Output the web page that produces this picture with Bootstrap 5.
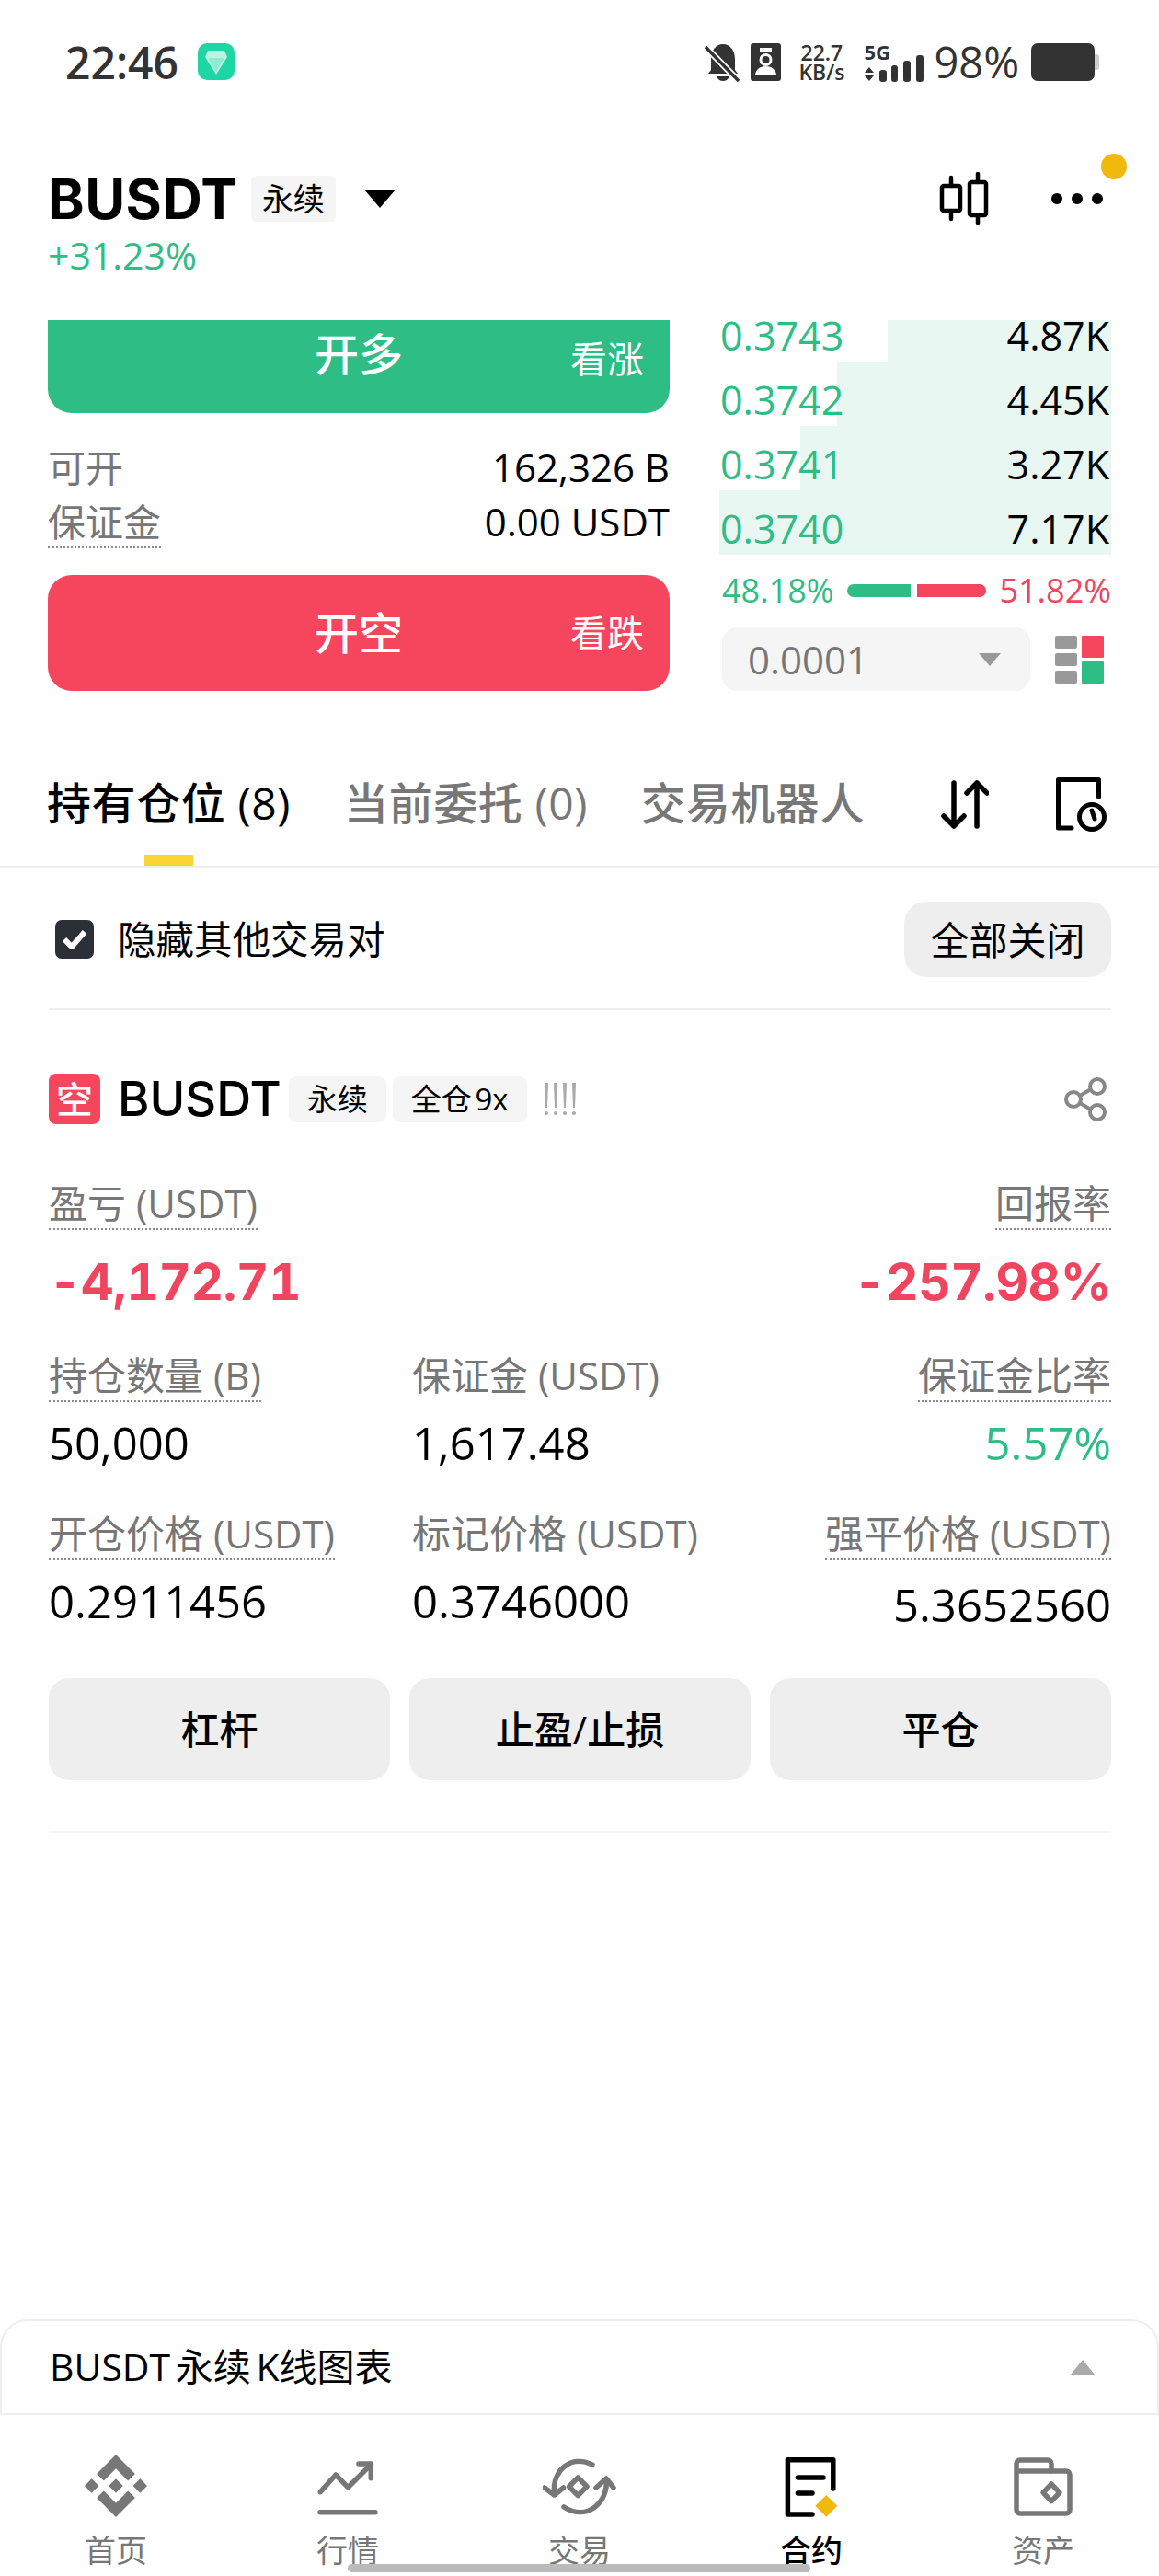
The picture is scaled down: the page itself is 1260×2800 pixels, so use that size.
<!DOCTYPE html>
<html lang="zh-CN">
<head>
  <meta charset="UTF-8">
  <title>BUSDT 永续</title>
  <link href="https://cdn.jsdelivr.net/npm/bootstrap@5.3.3/dist/css/bootstrap.min.css" rel="stylesheet">
  <style>
    body {
      margin: 0;
      background: #fff;
      color: #000;
      font-family: "Open Sans", "Noto Sans CJK SC", sans-serif;
    }
    svg { display: block; flex: none; }
    .phone {
      position: relative;
      width: 1260px;
      height: 2800px;
      overflow: hidden;
      display: flex;
      flex-direction: column;
    }
    .status-bar { height: 100px; padding: 47px 70px 0 71px; color: #333; }
    .clock { font-size: 48px; line-height: 41px; font-weight: 600; }
    .app-mark { width: 40px; height: 40px; margin-left: 21px; border-radius: 10px; background: #1ed6a3; }
    .contact-ico { margin-left: 11px; }
    .speed { width: 52px; margin-left: 18px; font-size: 23px; line-height: 21px; font-weight: 600; text-align: center; white-space: nowrap; }
    .net-box { position: relative; width: 66px; height: 42px; margin-left: 20px; }
    .net-5g { position: absolute; left: 0; top: -3px; font-size: 22px; line-height: 24px; font-weight: 700; }
    .battery-pct { margin-left: 10px; font-size: 47px; line-height: 41px; font-weight: 500; }
    .battery { width: 69px; height: 41px; margin-left: 13px; border-radius: 7px; background: #333; position: relative; }
    .battery::after { content: ""; position: absolute; left: 69px; top: 12px; width: 5px; height: 17px; background: #ccc; border-radius: 0 3px 3px 0; }

    .head-block { position: relative; height: 248px; padding: 86px 52px 0; }
    .pair-name { font-family: Inter, "Noto Sans CJK SC", sans-serif; font-size: 60px; line-height: 60px; font-weight: 700; letter-spacing: .5px; }
    .perp-tag { margin-left: 14px; padding: 0 12px; height: 50px; line-height: 50px; font-size: 34px; background: #f5f5f5; border-radius: 6px; }
    .drop-tri { margin-left: 31px; width: 0; height: 0; border-left: 17px solid transparent; border-right: 17px solid transparent; border-top: 20px solid #000; }
    .pct-up { margin-top: 11px; font-size: 41px; line-height: 40px; color: #2ebd85; }
    .notice-dot { position: absolute; left: 1197px; top: 67px; width: 28px; height: 28px; border-radius: 50%; background: #f0b90b; }
    .head-tools { margin-right: 9px; }

    .trade-zone { display: flex; height: 403px; margin-left: 52px; width: 1156px; }
    .trade-left { width: 676px; }
    .trade-right { width: 426px; margin-left: 54px; }
    .act-btn {
      display: grid;
      grid-template-columns: 1fr auto 1fr;
      align-items: center;
      width: 100%;
      padding: 0 28px;
      border: 0;
      color: #fff;
      font-size: 48px;
      font-weight: 500;
    }
    .act-btn small { font-size: 40px; font-weight: 400; text-align: right; grid-column: 3; }
    .act-btn span { grid-column: 2; }
    .act-long { height: 101px; padding-bottom: 28px; background: #2ebd85; border-radius: 0 0 26px 26px; }
    .act-long small { margin-top: 10px; }
    .act-short { height: 126px; background: #f6465d; border-radius: 26px; }
    .info-line { font-size: 42px; line-height: 44px; }
    .info-line .txt-muted { font-size: 41px; }
    .txt-muted { color: #777; }
    .dot-under { display: inline-block; padding-bottom: 5px; border-bottom: 2px dotted #8a8a8a; }

    .book-row { position: relative; height: 70px; padding-top: 14px; font-size: 43px; line-height: 56px; }
    .book-row.clipped { height: 45px; padding-top: 0; line-height: 34px; }
    .book-depth { position: absolute; right: 0; top: 0; bottom: 0; background: #e9f7f2; }
    .book-cells { position: relative; display: flex; justify-content: space-between; padding: 0 2px 0 1px; }
    .book-price { color: #2ebd85; }
    .ratio-line { margin-top: 19px; padding-left: 3px; font-size: 36px; line-height: 40px; }
    .ratio-green { color: #2ebd85; }
    .ratio-red { color: #f0455f; }
    .ratio-fill { height: 14px; }
    .ratio-track { gap: 7px; margin: 0 14px; }
    .tick-select { width: 335px; height: 69px; margin-left: 3px; padding: 0 32px 0 28px; border-radius: 16px; background: #f5f5f5; color: #777; font-size: 42px; }
    .tick-tri { width: 0; height: 0; border-left: 12px solid transparent; border-right: 12px solid transparent; border-top: 14px solid #999; }
    .tick-row { margin-top: 20px; }
    .layout-ico { margin-left: 27px; }

    .tab-strip { position: relative; height: 192px; padding: 97px 52px 0; border-bottom: 2px solid #eee; font-size: 48px; line-height: 50px; letter-spacing: .6px; white-space: nowrap; }
    .tab-active { font-weight: 500; margin-left: -1px; }
    .tab-off { color: #777; margin-left: 58px; font-weight: 500; }
    .tab-bar { position: absolute; left: 157px; bottom: 0; width: 53px; height: 12px; background: #fcd535; }
    .sort-ico { margin-right: 72px; }
    .history-ico { margin: -5px 5px 0 0; }

    .inset { margin: 0 52px 0 53px; }
    .filter-row { height: 155px; padding-top: 37px; border-bottom: 2px solid #eee; align-items: flex-start; }
    .fake-check { width: 42px; height: 42px; margin: 20px 0 0 7px; border-radius: 7px; background: #2b2f36; }
    .filter-label { margin: 19px 0 0 26px; font-size: 41.5px; line-height: 44px; }
    .close-all { width: 225px; height: 82px; border: 0; border-radius: 24px; background: #eee; color: #000; font-size: 42px; padding: 0; }

    .pos-head { height: 55px; margin-top: 69px; }
    .side-tag { width: 56px; height: 55px; border-radius: 8px; background: #f6465d; color: #fff; font-size: 40px; line-height: 55px; text-align: center; font-weight: 500; }
    .pos-name { margin-left: 19px; font-family: Inter, "Noto Sans CJK SC", sans-serif; font-size: 52.5px; font-weight: 500; }
    .pos-tag { margin-left: 8px; padding: 0 20px; height: 50px; line-height: 50px; font-size: 33px; background: #f5f5f5; border-radius: 8px; white-space: nowrap; word-spacing: -5px; }
    .pos-tag.wide { padding: 0 20px; margin-left: 7px; }
    .warn-bars { margin-left: 19px; }
    .share-ico { margin-right: 5px; }

    .stat-grid { display: grid; grid-template-columns: 395px 1fr auto; margin-top: 64px; font-size: 42px; line-height: 44px; }
    .stat-grid .end { grid-column: 3; text-align: right; }
    .big-val { margin-top: 26px; font-family: Inter, sans-serif; font-size: 55px; line-height: 60px; font-weight: 700; color: #f0455f; font-variant-numeric: tabular-nums; letter-spacing: -.5px; }
    .num-val { margin-top: 16px; font-size: 49px; line-height: 56px; }
    .gap-row { margin-top: 50px; }
    .gap-row-b { margin-top: 49px; }
    .nudge { position: relative; top: 4px; }
    .up-val { color: #2ebd85; }

    .pos-actions { display: grid; grid-template-columns: repeat(3, 1fr); gap: 21px; margin-top: 56px; padding-bottom: 55px; border-bottom: 2px solid #f5f5f5; }
    .pos-btn { height: 111px; border: 0; border-radius: 22px; background: #eee; color: #000; font-size: 42px; font-weight: 500; padding: 0; }

    .sheet-bar { margin-top: auto; height: 104px; padding: 0 68px 0 52px; border: 2px solid #eee; border-radius: 30px 30px 0 0; font-size: 41px; word-spacing: -5px; }
    .sheet-tri { width: 0; height: 0; border-left: 13px solid transparent; border-right: 13px solid transparent; border-bottom: 16px solid #aaa; }
    .tab-nav { display: grid; grid-template-columns: repeat(5, 252px); height: 175px; padding-top: 42px; }
    .tab-nav-item { display: flex; flex-direction: column; align-items: center; color: #777; font-size: 34px; line-height: 40px; }
    .tab-nav-item svg { height: 70px; margin-bottom: 15px; }
    .tab-nav-item.current { color: #000; font-weight: 500; }
    .home-pill { position: absolute; left: 378px; top: 2787px; width: 503px; height: 9px; border-radius: 5px; background: #bbb; }
  </style>
</head>
<body>
<div class="phone">

  <div class="status-bar d-flex align-items-start">
    <div class="clock">22:46</div>
    <div class="app-mark d-flex align-items-center justify-content-center">
      <svg width="24" height="28" viewBox="0 0 24 28"><path d="M3 2h18l3 7-12 19L0 9z" fill="#b9f5e2"/><path d="M3 10h18l-9 15z" fill="#8debd0"/></svg>
    </div>
    <div class="ms-auto d-flex align-items-start">
      <svg width="39" height="42" viewBox="0 0 39 42">
        <path d="M7 29V17C7 8 12 1 20 1s13 7 13 16v12l3 4H4z" fill="#333"/>
        <path d="M13 36h14c-1 3-4 5-7 5s-6-2-7-5z" fill="#333"/>
        <path d="M2 5l34 35" stroke="#fff" stroke-width="7"/>
        <path d="M1 4l36 37" stroke="#333" stroke-width="3.5"/>
      </svg>
      <svg class="contact-ico" width="33" height="41" viewBox="0 0 33 41">
        <rect width="33" height="41" rx="3" fill="#333"/>
        <rect x="10" y="5" width="13" height="4" fill="#fff"/>
        <circle cx="16.500" cy="18" r="5.500" fill="none" stroke="#fff" stroke-width="3"/>
        <path d="M5 35c0-6 5-10 11.500-10S28 29 28 35z" fill="#fff"/>
      </svg>
      <div class="speed">22.7<br>KB/s</div>
      <div class="net-box">
        <span class="net-5g">5G</span>
        <svg width="66" height="42" viewBox="0 0 66 42">
          <path d="M6 26l5 6H1zM1 35h10l-5 6z" fill="#333"/>
          <rect x="17" y="29" width="8" height="13" rx="3" fill="#333"/>
          <rect x="30" y="24" width="7" height="18" rx="3" fill="#333"/>
          <rect x="43" y="19" width="8" height="23" rx="3" fill="#333"/>
          <rect x="57" y="13" width="8" height="29" rx="3" fill="#333"/>
        </svg>
      </div>
      <div class="battery-pct">98%</div>
      <div class="battery"></div>
    </div>
  </div>

  <div class="head-block">
    <div class="d-flex align-items-center">
      <div class="pair-name">BUSDT</div>
      <div class="perp-tag">永续</div>
      <div class="drop-tri"></div>
      <div class="ms-auto d-flex align-items-center head-tools">
        <svg width="54" height="58" viewBox="0 0 54 58" fill="none" stroke="#000" stroke-width="4.500" stroke-linecap="round">
          <rect x="3" y="15" width="20" height="27" rx="2"/>
          <path d="M13 6v9M13 42v9"/>
          <rect x="33" y="11" width="18" height="36" rx="2"/>
          <path d="M42 2v9M42 47v9"/>
        </svg>
        <svg style="margin-left:68px" width="56" height="14" viewBox="0 0 56 14" fill="#000">
          <circle cx="6" cy="7" r="6"/><circle cx="28" cy="7" r="6"/><circle cx="50" cy="7" r="6"/>
        </svg>
      </div>
    </div>
    <div class="pct-up">+31.23%</div>
    <div class="notice-dot"></div>
  </div>

  <div class="trade-zone">
    <div class="trade-left">
      <button class="btn act-btn act-long"><span>开多</span><small>看涨</small></button>
      <div class="info-line d-flex justify-content-between" style="margin-top:37px">
        <span class="txt-muted">可开</span><span>162,326 B</span>
      </div>
      <div class="info-line d-flex justify-content-between align-items-start" style="margin-top:15px">
        <span class="txt-muted dot-under">保证金</span><span>0.00 USDT</span>
      </div>
      <button class="btn act-btn act-short" style="margin-top:29px"><span>开空</span><small>看跌</small></button>
    </div>
    <div class="trade-right">
      <div class="book-row clipped">
        <div class="book-depth" style="width:57%"></div>
        <div class="book-cells"><span class="book-price">0.3743</span><span>4.87K</span></div>
      </div>
      <div class="book-row">
        <div class="book-depth" style="width:70%"></div>
        <div class="book-cells"><span class="book-price">0.3742</span><span>4.45K</span></div>
      </div>
      <div class="book-row">
        <div class="book-depth" style="width:79.3%"></div>
        <div class="book-cells"><span class="book-price">0.3741</span><span>3.27K</span></div>
      </div>
      <div class="book-row">
        <div class="book-depth" style="width:100%"></div>
        <div class="book-cells"><span class="book-price">0.3740</span><span>7.17K</span></div>
      </div>
      <div class="ratio-line d-flex align-items-center">
        <span class="ratio-green">48.18%</span>
        <div class="ratio-track d-flex flex-grow-1">
          <div class="ratio-fill" style="width:48%;background:#2ebd85;border-radius:7px 0 0 7px"></div>
          <div class="ratio-fill" style="width:52%;background:#f6465d;border-radius:0 7px 7px 0"></div>
        </div>
        <span class="ratio-red">51.82%</span>
      </div>
      <div class="tick-row d-flex align-items-center">
        <div class="tick-select d-flex align-items-center justify-content-between">
          <span>0.0001</span><div class="tick-tri"></div>
        </div>
        <svg class="layout-ico" width="53" height="52" viewBox="0 0 53 52">
          <rect x="0" y="0" width="24" height="14" rx="2" fill="#999"/>
          <rect x="0" y="19" width="24" height="14" rx="2" fill="#999"/>
          <rect x="0" y="38" width="24" height="14" rx="2" fill="#999"/>
          <rect x="29" y="0" width="24" height="24" rx="1" fill="#f6465d"/>
          <rect x="29" y="28" width="24" height="24" rx="1" fill="#2ebd85"/>
        </svg>
      </div>
    </div>
  </div>

  <div class="tab-strip d-flex">
    <span class="tab-active">持有仓位 (8)</span>
    <span class="tab-off">当前委托 (0)</span>
    <span class="tab-off">交易机器人</span>
    <svg class="ms-auto sort-ico" width="52" height="54" viewBox="0 0 52 54" fill="none" stroke="#000" stroke-width="5.500" stroke-linecap="round" stroke-linejoin="round">
      <path d="M14 3v47M3 39l11 11 11-11"/>
      <path d="M39 50V3M28 14L39 3l11 11"/>
    </svg>
    <svg class="history-ico" width="56" height="62" viewBox="0 0 56 62" fill="none" stroke="#000" stroke-width="5" stroke-linecap="round" stroke-linejoin="round">
      <path d="M18 57H3.500V4.500h44V23"/>
      <circle cx="40" cy="45" r="13.500"/>
      <path d="M40 38l3 9"/>
    </svg>
    <div class="tab-bar"></div>
  </div>

  <div class="inset">
    <div class="filter-row d-flex justify-content-between">
      <div class="d-flex align-items-start">
        <div class="fake-check d-flex align-items-center justify-content-center">
          <svg width="26" height="22" viewBox="0 0 26 22" fill="none" stroke="#fff" stroke-width="6"><path d="M2 11l8 8L24 3"/></svg>
        </div>
        <div class="filter-label">隐藏其他交易对</div>
      </div>
      <button class="btn close-all">全部关闭</button>
    </div>

    <div class="pos-head d-flex align-items-center">
      <div class="side-tag">空</div>
      <div class="pos-name">BUSDT</div>
      <div class="pos-tag">永续</div>
      <div class="pos-tag wide">全仓 9x</div>
      <svg class="warn-bars" width="34" height="36" viewBox="0 0 34 36" fill="#aaa">
        <path d="M0 0h4l-1 27H1zM10 0h4l-1 27h-2zM20 0h4l-1 27h-2zM30 0h4l-1 27h-2z"/>
        <circle cx="2" cy="33" r="2"/><circle cx="12" cy="33" r="2"/><circle cx="22" cy="33" r="2"/><circle cx="32" cy="33" r="2"/>
      </svg>
      <svg class="ms-auto share-ico" width="46" height="48" viewBox="0 0 46 48" fill="none" stroke="#888" stroke-width="4">
        <circle cx="36" cy="10" r="8"/><circle cx="10" cy="24" r="8"/><circle cx="36" cy="38" r="8"/>
        <path d="M17 20l12-7M17 28l12 7"/>
      </svg>
    </div>

    <div class="stat-grid">
      <div><span class="txt-muted dot-under">盈亏 (USDT)</span></div>
      <div class="end"><span class="txt-muted dot-under">回报率</span></div>
      <div class="big-val">-4,172.71</div>
      <div class="end big-val">-257.98%</div>

      <div class="gap-row"><span class="txt-muted dot-under">持仓数量 (B)</span></div>
      <div class="gap-row"><span class="txt-muted">保证金 (USDT)</span></div>
      <div class="gap-row text-end"><span class="txt-muted dot-under">保证金比率</span></div>
      <div class="num-val">50,000</div>
      <div class="num-val">1,617.48</div>
      <div class="num-val text-end up-val">5.57%</div>

      <div class="gap-row-b"><span class="txt-muted dot-under">开仓价格 (USDT)</span></div>
      <div class="gap-row-b"><span class="txt-muted">标记价格 (USDT)</span></div>
      <div class="gap-row-b text-end"><span class="txt-muted dot-under">强平价格 (USDT)</span></div>
      <div class="num-val">0.2911456</div>
      <div class="num-val">0.3746000</div>
      <div class="num-val text-end nudge">5.3652560</div>
    </div>

    <div class="pos-actions">
      <button class="btn pos-btn">杠杆</button>
      <button class="btn pos-btn">止盈/止损</button>
      <button class="btn pos-btn">平仓</button>
    </div>
  </div>

  <div class="sheet-bar d-flex align-items-center justify-content-between">
    <span>BUSDT 永续 K线图表</span>
    <div class="sheet-tri"></div>
  </div>

  <nav class="tab-nav">
    <div class="tab-nav-item">
      <svg width="68" viewBox="0 0 126.610 126.610" fill="#777"><path d="M38.730 53.200l24.590-24.580 24.600 24.600 14.300-14.310L63.320 0 24.420 38.900zM0 63.310l14.300-14.310 14.310 14.310-14.310 14.300zM38.730 73.410l24.590 24.590 24.600-24.600 14.310 14.290-38.900 38.910-38.910-38.880-.02-.02zM98.010 63.310l14.300-14.300 14.300 14.300-14.300 14.300zM77.830 63.300L63.320 48.780 48.810 63.280l14.510 14.500z"/></svg>
      <span>首页</span>
    </div>
    <div class="tab-nav-item">
      <svg width="80" viewBox="0 0 80 70" fill="none" stroke="#777" stroke-width="5.500" stroke-linecap="round" stroke-linejoin="round">
        <path d="M10.300 41.700L27 23l13.300 13.700L65.300 11.700"/><path d="M52 11h13.300v15.700"/>
        <path d="M10 63.700h60"/>
      </svg>
      <span>行情</span>
    </div>
    <div class="tab-nav-item">
      <svg width="80" viewBox="0 0 80 70" fill="none" stroke="#777" stroke-width="5.500" stroke-linecap="round" stroke-linejoin="round">
        <path d="M12.600 42C10 20 30 0 54 12"/><path d="M2 37l10.600 8 9.900-8"/>
        <path d="M69 28C72 50 50 75 23 58"/><path d="M58 37l11-10 8 10"/>
        <path d="M38.300 26L48 35.700l-9.700 9.800-9.700-9.800z"/>
      </svg>
      <span>交易</span>
    </div>
    <div class="tab-nav-item current">
      <svg width="80" viewBox="0 0 80 70" fill="none" stroke="#000" stroke-width="5.500" stroke-linecap="round" stroke-linejoin="round">
        <path d="M63.800 38V6.700H14.400V66H41"/>
        <path d="M25.400 26H53M25.400 43H41"/>
        <path d="M56.300 45l12 11.700-12 12-12-12z" fill="#f0b90b" stroke="none"/>
      </svg>
      <span>合约</span>
    </div>
    <div class="tab-nav-item">
      <svg width="80" viewBox="0 0 80 70" fill="none" stroke="#777" stroke-width="5.500" stroke-linejoin="round">
        <path d="M11 19v-8a4 4 0 0 1 4-4h30a4 4 0 0 1 4 4v8h16a4 4 0 0 1 4 4v38a4 4 0 0 1-4 4H15a4 4 0 0 1-4-4z"/>
        <path d="M11 19h38"/>
        <path d="M49 33l9 9.300-9 9.300-9-9.300z"/>
      </svg>
      <span>资产</span>
    </div>
  </nav>

  <div class="home-pill"></div>
</div>
<script src="https://cdn.jsdelivr.net/npm/bootstrap@5.3.3/dist/js/bootstrap.bundle.min.js"></script>
</body>
</html>
